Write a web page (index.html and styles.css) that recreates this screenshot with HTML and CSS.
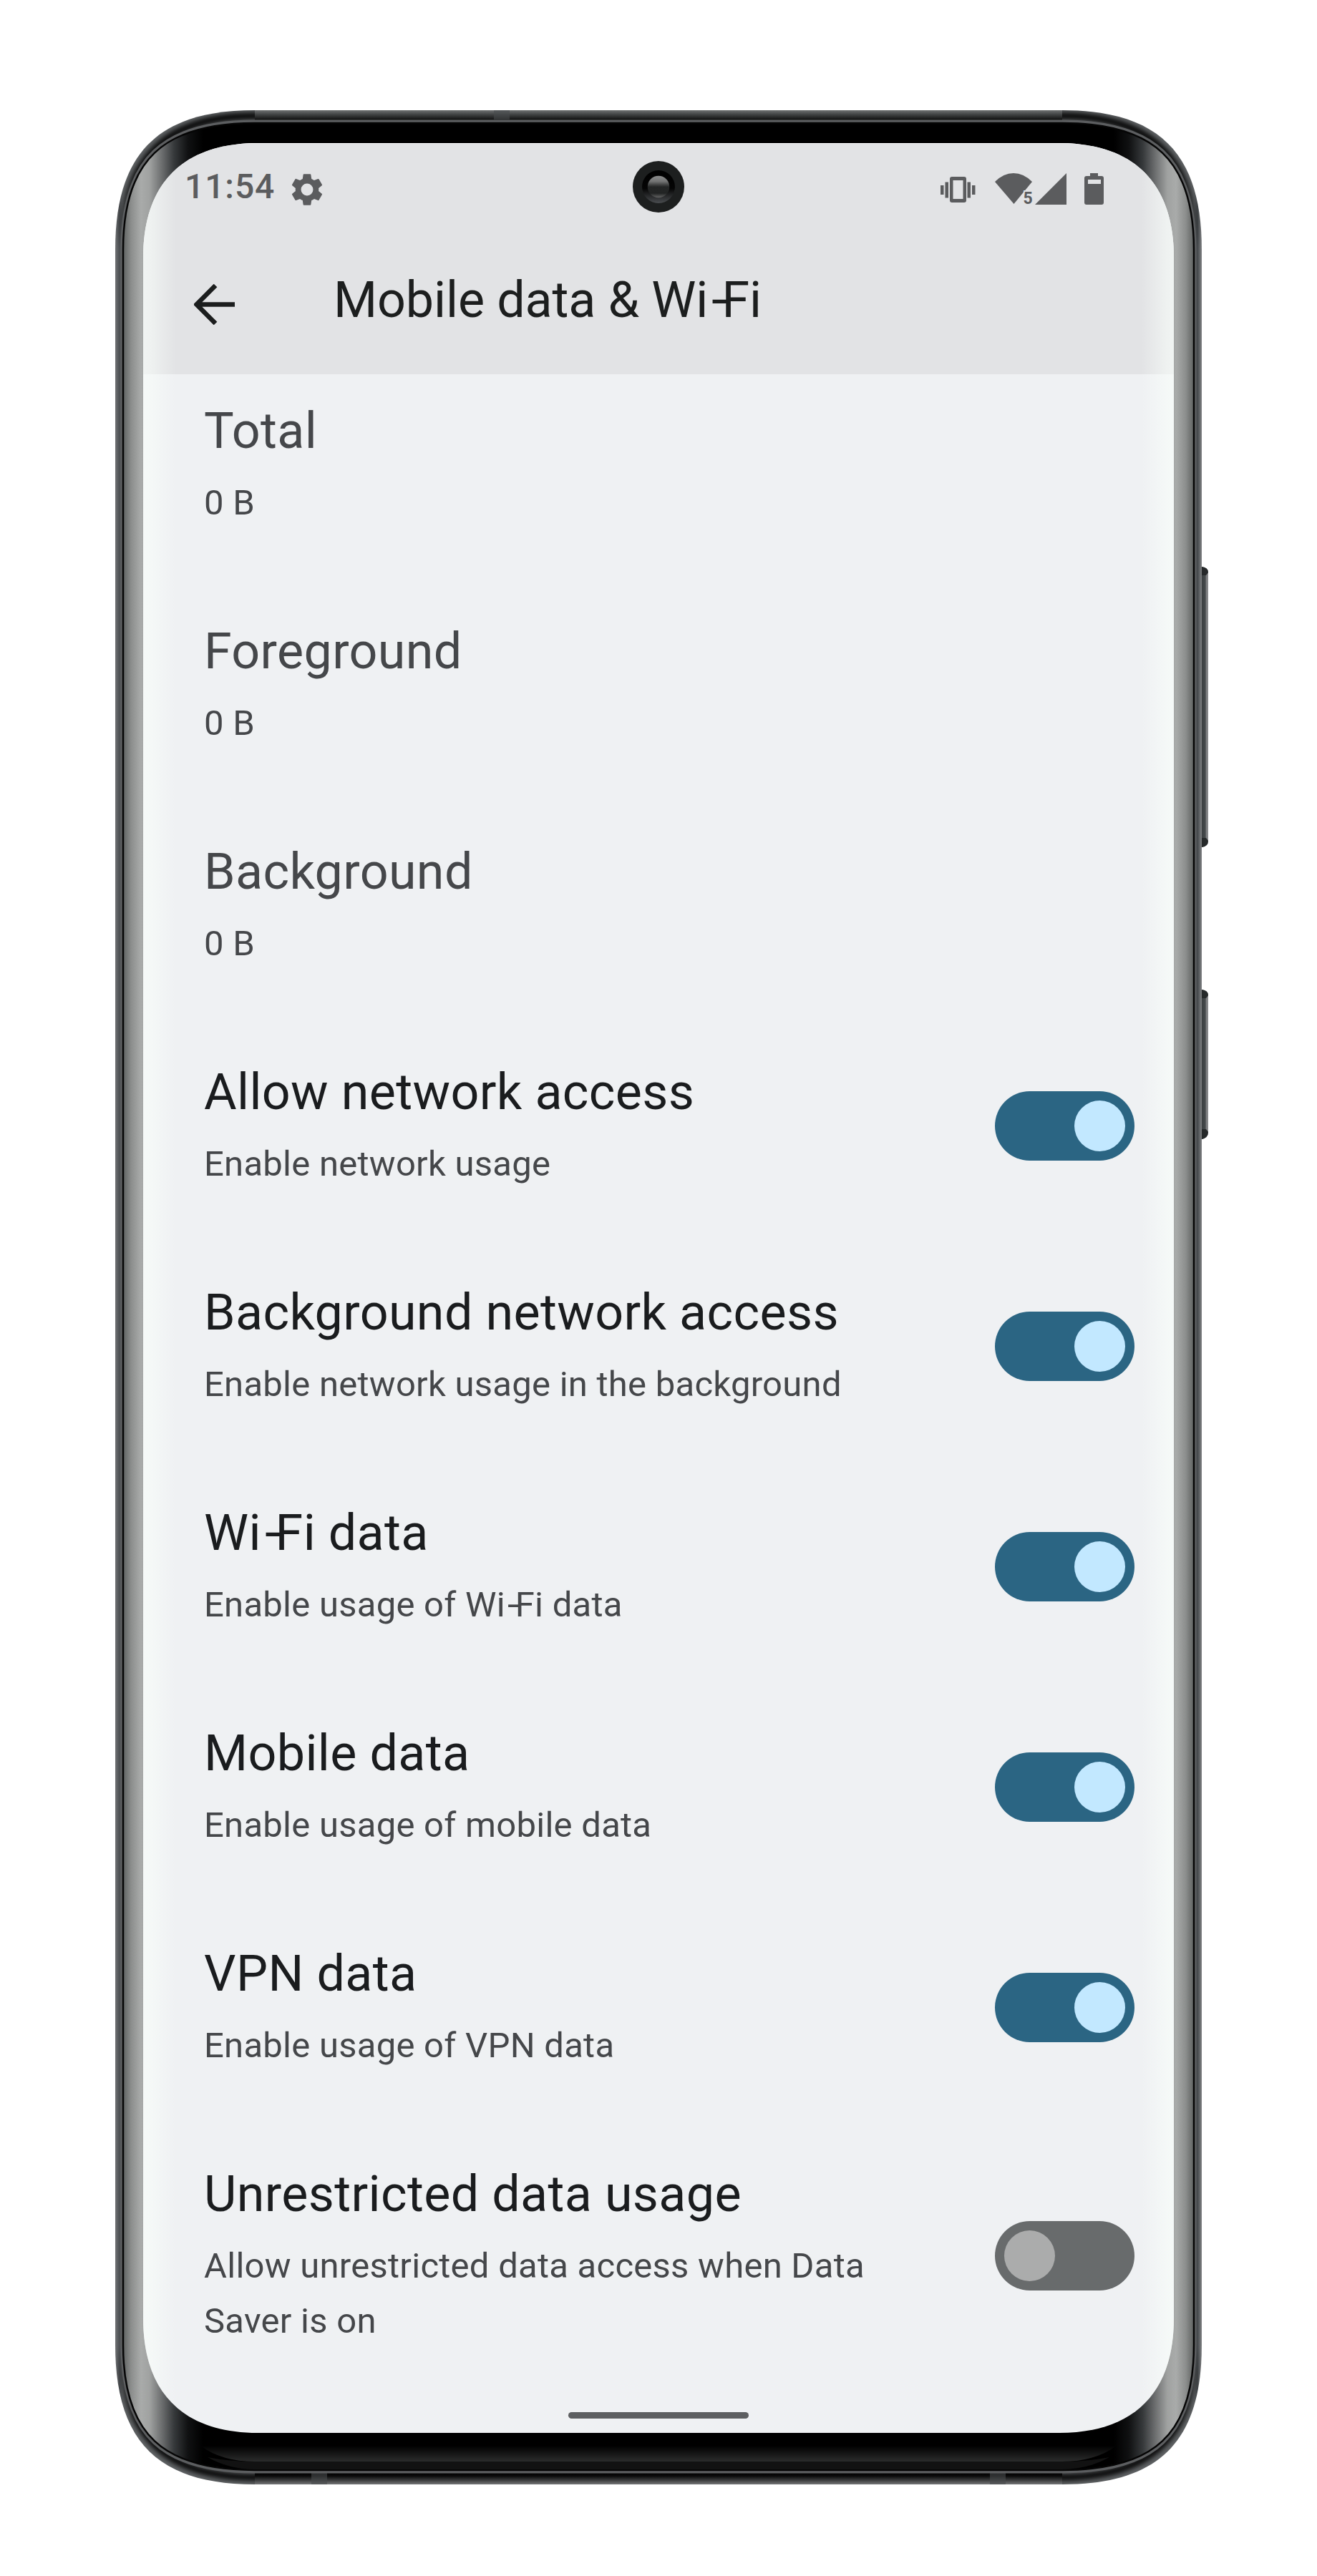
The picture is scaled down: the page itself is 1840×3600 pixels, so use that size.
FILE: index.html
```html
<!DOCTYPE html>
<html lang="en">
<head>
<meta charset="utf-8">
<title>Mobile data &amp; Wi-Fi</title>
<link rel="stylesheet" href="styles.css">
</head>
<body>
<div class="stage">
  <svg class="device" viewBox="0 0 1840 3600" aria-hidden="true">
    <defs>
      <linearGradient id="railX" gradientUnits="userSpaceOnUse" x1="161" y1="0" x2="1679" y2="0">
        <stop offset="0" stop-color="#707274"/><stop offset=".004" stop-color="#4b4e51"/><stop offset=".007" stop-color="#606365"/>
        <stop offset=".993" stop-color="#606365"/><stop offset=".996" stop-color="#43474a"/><stop offset="1" stop-color="#808284"/>
      </linearGradient>
      <linearGradient id="railTop" x1="0" y1="154" x2="0" y2="168" gradientUnits="userSpaceOnUse">
        <stop offset="0" stop-color="#6e7071"/><stop offset=".4" stop-color="#444647"/><stop offset="1" stop-color="#0c0c0c"/>
      </linearGradient>
      <linearGradient id="railBottom" x1="0" y1="3455" x2="0" y2="3472" gradientUnits="userSpaceOnUse">
        <stop offset="0" stop-color="#000"/><stop offset=".3" stop-color="#090909"/><stop offset=".6" stop-color="#333435"/><stop offset="1" stop-color="#757678"/>
      </linearGradient>
      <linearGradient id="rimShade" x1="0" y1="154" x2="0" y2="3472" gradientUnits="userSpaceOnUse">
        <stop offset="0" stop-color="#050505"/><stop offset=".026" stop-color="#050505"/><stop offset=".058" stop-color="#050505" stop-opacity="0"/>
        <stop offset=".942" stop-color="#050505" stop-opacity="0"/><stop offset=".974" stop-color="#050505"/><stop offset="1" stop-color="#050505"/>
      </linearGradient>
      <linearGradient id="bezelX" gradientUnits="userSpaceOnUse" x1="173" y1="0" x2="1667" y2="0">
        <stop offset="0" stop-color="#636665"/><stop offset=".007" stop-color="#8c8e8d"/><stop offset=".016" stop-color="#a9abaa"/><stop offset=".024" stop-color="#a0a2a1"/><stop offset=".036" stop-color="#6a6c6d"/><stop offset=".047" stop-color="#36393b"/><stop offset=".06" stop-color="#101112"/><stop offset=".074" stop-color="#000"/>
        <stop offset=".926" stop-color="#000"/><stop offset=".94" stop-color="#101112"/><stop offset=".953" stop-color="#36393b"/><stop offset=".964" stop-color="#6a6c6d"/><stop offset=".976" stop-color="#a0a2a1"/><stop offset=".984" stop-color="#a9abaa"/><stop offset=".993" stop-color="#8c8e8d"/><stop offset="1" stop-color="#636665"/>
      </linearGradient>
      <linearGradient id="chin" x1="0" y1="3418" x2="0" y2="3440" gradientUnits="userSpaceOnUse">
        <stop offset="0" stop-color="#000"/><stop offset="1" stop-color="#2b2c2c"/>
      </linearGradient>
      <linearGradient id="key" x1="1679" y1="0" x2="1688" y2="0" gradientUnits="userSpaceOnUse">
        <stop offset="0" stop-color="#3c4042"/><stop offset=".55" stop-color="#45494b"/><stop offset=".75" stop-color="#858688"/><stop offset="1" stop-color="#858688"/>
      </linearGradient>
      <linearGradient id="lens" x1="0" y1="0" x2="0" y2="1">
        <stop offset="0" stop-color="#8b8c8c"/><stop offset=".25" stop-color="#747575"/><stop offset=".5" stop-color="#242626"/><stop offset=".8" stop-color="#222424"/><stop offset="1" stop-color="#666"/>
      </linearGradient>
      <linearGradient id="well" x1="0" y1="0" x2="0" y2="1">
        <stop offset="0" stop-color="#000"/><stop offset=".55" stop-color="#050505"/><stop offset="1" stop-color="#4a4d50"/>
      </linearGradient>
      <filter id="soft" x="-5%" y="-5%" width="110%" height="110%"><feGaussianBlur stdDeviation="3.5"/></filter>
      <clipPath id="bodyClip"><path d="M161 349C161 214 221 154 356 154H1484C1619 154 1679 214 1679 349V3277C1679 3412 1619 3472 1484 3472H356C221 3472 161 3412 161 3277Z"/></clipPath>
    </defs>
    <path d="M1678 792h1q9 1 9 8v375q0 8-9 9h-1zM1678 1383h1q9 1 9 8v191q0 8-9 10h-1z" fill="url(#key)"/>
    <path d="M1678 792h1q9 1 9 8l-3 4h-7zM1678 1184h1q9-1 9-9l-3-4h-7zM1678 1383h1q9 1 9 8l-3 4h-7zM1678 1592h1q9-2 9-10l-3-4h-7z" fill="#26292a"/>
    <path d="M161 349C161 214 221 154 356 154H1484C1619 154 1679 214 1679 349V3277C1679 3412 1619 3472 1484 3472H356C221 3472 161 3412 161 3277Z" fill="url(#railX)"/>
    <g clip-path="url(#bodyClip)">
      <path d="M168 370C166 222 230 162 356 162H1484C1610 162 1674 222 1672 370M1672 3256C1674 3404 1610 3462 1484 3462H356C230 3462 166 3404 168 3256" fill="none" stroke="url(#rimShade)" stroke-width="9" filter="url(#soft)"/>
      <path d="M356 154H1484V168H356z" fill="url(#railTop)"/>
      <path d="M356 3455H1484V3472H356z" fill="url(#railBottom)"/>
      <path d="M690 154h22v13h-22zM435 3456h22v16h-22zM1383 3456h22v16h-22z" fill="#484b4d" opacity=".6"/>
    </g>
    <path d="M171 349C171 222 227 170 356 170H1484C1613 170 1669 222 1669 349V3277C1669 3404 1613 3454 1484 3454H356C227 3454 171 3404 171 3277Z" fill="url(#bezelX)" stroke="#5c5e60" stroke-width="5"/>
    <path d="M172 349C172 224 228 172 356 172H1484C1612 172 1668 224 1668 349V3277C1668 3402 1612 3452 1484 3452H356C228 3452 172 3402 172 3277Z" fill="none" stroke="#050505" stroke-width="2.4"/>
    <path d="M280 3418H1560Q1530 3440 1484 3440H356Q310 3440 280 3418z" fill="url(#chin)"/>
    <path d="M290 3434Q320 3440 356 3440H1484Q1520 3440 1550 3434Q1520 3451 1484 3451H356Q320 3451 290 3434z" fill="#121212"/>
  </svg>

  <main class="screen">
    <header class="top">
      <div class="status">
        <span class="clock">11:54</span>
        <svg class="gear" viewBox="0 0 24 24"><path fill="currentColor" fill-rule="evenodd" d="M19.43 12.98c.04-.32.07-.64.07-.98s-.03-.66-.07-.98l2.11-1.65c.19-.15.24-.42.12-.64l-2-3.46c-.12-.22-.39-.3-.61-.22l-2.49 1c-.52-.4-1.08-.73-1.69-.98l-.38-2.65C14.46 2.18 14.25 2 14 2h-4c-.25 0-.46.18-.49.42l-.38 2.65c-.61.25-1.17.59-1.69.98l-2.49-1c-.23-.09-.49 0-.61.22l-2 3.46c-.13.22-.07.49.12.64l2.11 1.65c-.04.32-.07.65-.07.98s.03.66.07.98l-2.11 1.65c-.19.15-.24.42-.12.64l2 3.46c.12.22.39.3.61.22l2.49-1c.52.4 1.08.73 1.69.98l.38 2.65c.03.24.24.42.49.42h4c.25 0 .46-.18.49-.42l.38-2.65c.61-.25 1.17-.59 1.69-.98l2.49 1c.23.09.49 0 .61-.22l2-3.46c.12-.22.07-.49-.12-.64zM12 15.900a3.900 3.900 0 1 1 0-7.800 3.900 3.900 0 0 1 0 7.800z"/></svg>
        <svg class="tray" viewBox="0 0 230 48">
          <g fill="currentColor">
            <path d="M0 18h4.500v13H0zM6.500 13.500H11v22H6.500zM37.500 13.500H42v22h-4.500zM44 18h4.500v13H44z"/>
            <path fill-rule="evenodd" d="M16 6h17q3 0 3 3v30q0 3-3 3H16q-3 0-3-3V9q0-3 3-3zm1.500 5v26h14V11z"/>
            <path d="M76 13Q88 1 102 1t26 12L102.500 44z"/>
            <path d="M176 1v44h-44z"/>
            <path fill-rule="evenodd" d="M209 1h11v4h5q3 0 3 3v34q0 3-3 3h-21q-3 0-3-3V8q0-3 3-3h5zm-3 9v6h18v-6z"/>
          </g>
          <text x="115.500" y="44" class="badge">5</text>
        </svg>
      </div>
      <div class="appbar">
        <svg class="back" viewBox="0 0 56 56"><path d="M56 28H4M29.500 2L3.500 28l26 26" fill="none" stroke="currentColor" stroke-width="6.500"/></svg>
        <h1>Mobile data &amp; Wi<span class="hy">-</span>Fi</h1>
      </div>
      <svg class="camera" viewBox="0 0 72 72"><circle cx="36" cy="36" r="36" fill="#1d1f1f"/><circle cx="36" cy="36" r="23" fill="url(#well)"/><circle cx="36" cy="36" r="15.300" fill="url(#lens)"/></svg>
    </header>
    <section class="list">
      <div class="row muted"><div class="copy"><h2>Total</h2><p>0 B</p></div></div>
      <div class="row muted"><div class="copy"><h2>Foreground</h2><p>0 B</p></div></div>
      <div class="row muted"><div class="copy"><h2>Background</h2><p>0 B</p></div></div>
      <div class="row"><div class="copy"><h2>Allow network access</h2><p>Enable network usage</p></div><span class="switch on"></span></div>
      <div class="row"><div class="copy"><h2>Background network access</h2><p>Enable network usage in the background</p></div><span class="switch on"></span></div>
      <div class="row"><div class="copy"><h2>Wi<span class="hy">-</span>Fi data</h2><p>Enable usage of Wi<span class="hy">-</span>Fi data</p></div><span class="switch on"></span></div>
      <div class="row"><div class="copy"><h2>Mobile data</h2><p>Enable usage of mobile data</p></div><span class="switch on"></span></div>
      <div class="row"><div class="copy"><h2>VPN data</h2><p>Enable usage of VPN data</p></div><span class="switch on"></span></div>
      <div class="row"><div class="copy"><h2>Unrestricted data usage</h2><p>Allow unrestricted data access when Data<br>Saver is on</p></div><span class="switch"></span></div>
    </section>
    <div class="gesture"></div>
  </main>
</div>
</body>
</html>
```
FILE: styles.css
```css
* { box-sizing: border-box; }
body { margin: 0; background: #fff; font-family: Roboto, "Liberation Sans", sans-serif; }
.stage { position: relative; width: 1840px; height: 3600px; padding: 200px; overflow: hidden; }
.device { position: absolute; inset: 0; width: 1840px; height: 3600px; }
.screen {
  position: relative; width: 1440px; height: 3200px; overflow: hidden;
  background: #eff1f3; display: flex; flex-direction: column;
  clip-path: path("M0 160C0 56 56 0 160 0H1280C1384 0 1440 56 1440 160V3040C1440 3144 1384 3200 1280 3200H160C56 3200 0 3144 0 3040Z");
}
/* light falling off the curved glass edges */
.screen::after {
  content: ""; position: absolute; inset: 0; z-index: 2;
  background: linear-gradient(90deg, #fafffb99 0, #fafffb88 10px, #fafffb44 27px, #fafffb00 46px, #fafffb00 1394px, #fafffb44 1413px, #fafffb88 1430px, #fafffb99 1440px);
}
.top { position: relative; z-index: 1; flex: none; height: 323px; background: #e2e3e5; border-top: 1px solid #fff; }
.status { display: flex; align-items: center; height: 127px; padding: 0 96px 0 58px; color: #5b5c5e; }
.clock { font-size: 48px; line-height: 56px; font-weight: 500; letter-spacing: .9px; margin-bottom: 8px; }
.gear { width: 52px; height: 52px; margin-left: 19px; }
.tray { width: 230px; height: 48px; margin-left: auto; overflow: visible; }
.badge { font: 700 23px Roboto, sans-serif; fill: #5b5c5e; stroke: #e2e3e5; stroke-width: 4px; paint-order: stroke; }
.appbar { display: flex; align-items: center; padding-left: 71px; height: 195px; color: #1c1e1e; }
.back { width: 57px; height: 57px; flex: none; }
h1, h2, p { margin: 0; font-weight: 400; }
h1 { margin: -14px 0 0 138px; font-size: 70px; line-height: 82px; letter-spacing: -.1px; }
.hy { display: inline-block; margin: 0 -.07em 0 .07em; transform: scaleX(1.2); transform-origin: left; }
.camera { position: absolute; left: 684px; top: 24px; width: 72px; height: 72px; }
.list { flex: none; margin-top: -28px; }
.row { display: flex; align-items: center; justify-content: space-between; padding: 66px 55px 62px 85px; }
h2 { font-size: 70px; line-height: 82px; letter-spacing: .36px; color: #1a1c1e; margin-bottom: 21px; white-space: nowrap; }
p { font-size: 49px; line-height: 77px; letter-spacing: .26px; color: #45474a; white-space: nowrap; }
.muted h2 { color: #45474a; }
.switch { display: flex; align-items: center; width: 195px; height: 97px; margin-top: -3px; padding: 0 13px; border-radius: 49px; background: #686b6c; }
.switch::before { content: ""; width: 71px; height: 71px; border-radius: 50%; background: #abacac; }
.switch.on { justify-content: flex-end; background: #2b6583; }
.switch.on::before { background: #c2e8ff; }
.gesture { width: 252px; height: 9px; border-radius: 5px; background: #5d5f61; margin: auto auto 20px; }
```
